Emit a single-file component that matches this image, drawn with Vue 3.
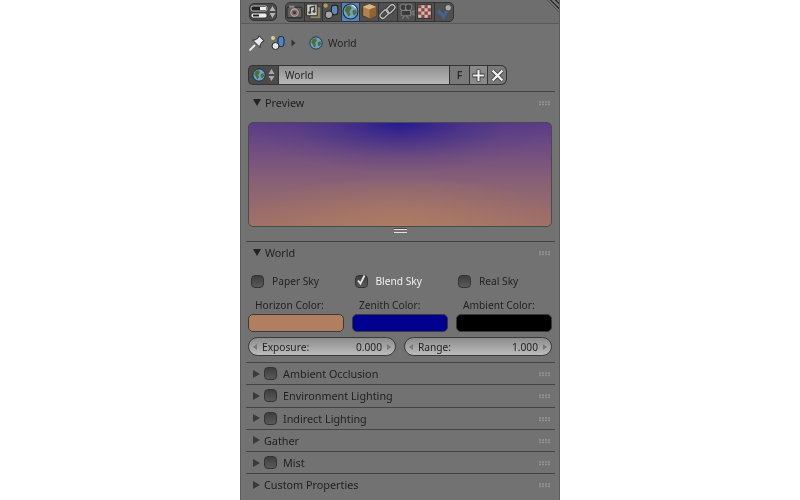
<script setup>
const tabs = ['render', 'layers', 'scene', 'world', 'object', 'link', 'camera', 'texture', 'check']

const checks = [
  { label: 'Paper Sky', on: false },
  { label: 'Blend Sky', on: true },
  { label: 'Real Sky', on: false }
]

const colors = [
  { label: 'Horizon Color:', value: '#b07f5f' },
  { label: 'Zenith Color:', value: '#000090' },
  { label: 'Ambient Color:', value: '#000000' }
]

const sliders = [
  { label: 'Exposure:', value: '0.000' },
  { label: 'Range:', value: '1.000' }
]

const closed = [
  { label: 'Ambient Occlusion', box: true },
  { label: 'Environment Lighting', box: true },
  { label: 'Indirect Lighting', box: true },
  { label: 'Gather', box: false },
  { label: 'Mist', box: true },
  { label: 'Custom Properties', box: false }
]
</script>

<template>
  <div class="page">
    <div class="editor">
      <div class="header">
        <div class="mode">
          <svg width="18" height="14" viewBox="0 0 18 14">
            <rect x="1" y="1" width="16" height="5" rx="2" fill="#222" stroke="#ddd" stroke-width="0.8" />
            <rect x="10" y="2" width="6" height="3" fill="#eee" />
            <rect x="1" y="8" width="16" height="5" rx="2" fill="#eee" stroke="#222" stroke-width="0.8" />
            <rect x="3" y="9.500" width="6" height="2" fill="#222" />
          </svg>
          <svg class="updown" width="7" height="14" viewBox="0 0 7 14">
            <path d="M3.500 1 L6.500 6 H0.500Z M3.500 13 L6.500 8 H0.500Z" fill="#b4b4b4" />
          </svg>
        </div>
        <div class="tabs">
          <div v-for="t in tabs" :key="t" class="tab" :class="{ active: t === 'world' }">
            <svg width="17" height="17" viewBox="0 0 16 16">
              <g v-if="t === 'render'">
                <rect x="1" y="4" width="14" height="10" rx="1" fill="#5e5e5e" stroke="#2a2a2a" />
                <rect x="3" y="2.500" width="5" height="2" fill="#8a8a8a" />
                <circle cx="8" cy="9" r="3.500" fill="#8a6a68" stroke="#b0b0b0" />
                <circle cx="8" cy="9" r="1.500" fill="#3a3a3a" />
              </g>
              <g v-else-if="t === 'layers'">
                <rect x="4.500" y="3.500" width="10.500" height="11.500" fill="#8d8468" stroke="#3a3a3a" />
                <rect x="1.500" y="1" width="10" height="11" fill="#cfc8ac" stroke="#333" />
                <path d="M5 9 V4 L9 3 V8" fill="none" stroke="#2c3c60" stroke-width="1.300" />
                <circle cx="4.500" cy="9" r="1.300" fill="#2c3c60" />
                <circle cx="8.500" cy="8" r="1.300" fill="#2c3c60" />
              </g>
              <g v-else-if="t === 'scene'">
                <circle cx="2.500" cy="2.500" r="2" fill="#a8a460" />
                <rect x="8" y="2" width="6" height="9" rx="2.500" fill="#5f86bd" stroke="#222" />
                <circle cx="5.500" cy="11" r="3.500" fill="#a6a6a6" stroke="#222" />
              </g>
              <g v-else-if="t === 'world'">
                <circle cx="8" cy="8" r="7" fill="#6aa2c8" stroke="#1c2c3c" />
                <path d="M4 3 L8 2.500 L9 5 L7 8 L8 11 L6 13 L4 9 L2.500 7Z M10 7 L13 6 L14 9 L11.500 12 L10 10Z" fill="#4f6f38" />
                <path d="M9 2 Q12 2.500 13 5" fill="none" stroke="#e6f0f6" />
              </g>
              <g v-else-if="t === 'object'">
                <path d="M8 1 L14.500 3.500 V12 L8 15 L1.500 12 V3.500Z" fill="#b2824c" stroke="#4a3a28" />
                <path d="M1.500 3.500 L8 6 L14.500 3.500 L8 1Z" fill="#dcb585" />
                <path d="M8 6 V15 L14.500 12 V3.500Z" fill="#8f6238" />
              </g>
              <g v-else-if="t === 'link'" fill="none">
                <rect x="0.500" y="8" width="9" height="5" rx="2.500" transform="rotate(-45 5 10.500)" stroke="#333" stroke-width="2.800" />
                <rect x="6.500" y="3" width="9" height="5" rx="2.500" transform="rotate(-45 11 5.500)" stroke="#333" stroke-width="2.800" />
                <rect x="0.500" y="8" width="9" height="5" rx="2.500" transform="rotate(-45 5 10.500)" stroke="#bdbdbd" stroke-width="1.300" />
                <rect x="6.500" y="3" width="9" height="5" rx="2.500" transform="rotate(-45 11 5.500)" stroke="#bdbdbd" stroke-width="1.300" />
              </g>
              <g v-else-if="t === 'camera'">
                <circle cx="5" cy="4" r="3" fill="#3c3c3c" stroke="#808080" />
                <circle cx="10" cy="4" r="3" fill="#3c3c3c" stroke="#808080" />
                <rect x="3" y="7" width="9" height="5" rx="1" fill="#3a3a3a" stroke="#808080" />
                <path d="M12 9 L15 7.500 V11.500 L12 10Z M6 12 L4 15 M8 12 L10 15" fill="#555" stroke="#808080" />
              </g>
              <g v-else-if="t === 'texture'">
                <rect x="1.500" y="1.500" width="13" height="13" fill="#c8bcb8" stroke="#333" />
                <path d="M2 2 h3 v3 h-3Z M8 2 h3 v3 h-3Z M5 5 h3 v3 h-3Z M11 5 h3 v3 h-3Z M2 8 h3 v3 h-3Z M8 8 h3 v3 h-3Z M5 11 h3 v3 h-3Z M11 11 h3 v3 h-3Z" fill="#96423c" />
              </g>
              <g v-else>
                <path d="M2 7 L7 13 L12 5" fill="none" stroke="#46628f" stroke-width="3" />
                <circle cx="11.500" cy="4.500" r="3" fill="#ababab" stroke="#333" stroke-width="0.700" />
              </g>
            </svg>
          </div>
        </div>
        <div class="corner"></div>
      </div>

      <div class="crumbs">
        <svg class="pin" width="16" height="16" viewBox="0 0 16 16">
          <path d="M0.500 15.500 L6 10" stroke="#eee" stroke-width="1.800" />
          <path d="M10 0.800 L15.200 6 L13 7 L11 10 L11 12.500 L3.500 5 L6 5 L9 3Z" fill="#e8e8e8" stroke="#2a2a2a" />
        </svg>
        <svg class="scene-icon" width="16" height="16" viewBox="0 0 16 16">
          <circle cx="3" cy="3" r="2" fill="#ddd67a" />
          <rect x="8" y="1.500" width="6" height="10" rx="2.500" fill="#4d83cc" stroke="#222" />
          <circle cx="5.500" cy="11" r="3.500" fill="#e4e4e4" stroke="#222" />
        </svg>
        <svg class="crumb-arrow" width="5" height="8" viewBox="0 0 5 8"><path d="M0.500 0.500 L4.500 4 L0.500 7.500Z" fill="#333" /></svg>
        <svg class="crumb-globe" width="14" height="14" viewBox="0 0 16 16">
          <circle cx="8" cy="8" r="7" fill="#6aa2c8" stroke="#1c2c3c" />
          <path d="M4 3 L8 2.500 L9 5 L7 8 L8 11 L6 13 L4 9 L2.500 7Z M10 7 L13 6 L14 9 L11.500 12 L10 10Z" fill="#4f6f38" />
        </svg>
        <span class="crumb-text">World</span>
      </div>

      <div class="id-row">
        <div class="id-browse">
          <svg width="14" height="14" viewBox="0 0 16 16">
            <circle cx="8" cy="8" r="7" fill="#6aa2c8" stroke="#1c2c3c" />
            <path d="M4 3 L8 2.500 L9 5 L7 8 L8 11 L6 13 L4 9 L2.500 7Z M10 7 L13 6 L14 9 L11.500 12 L10 10Z" fill="#4f6f38" />
          </svg>
          <svg width="7" height="14" viewBox="0 0 7 14">
            <path d="M3.500 1 L6.500 6 H0.500Z M3.500 13 L6.500 8 H0.500Z" fill="#a8a8a8" />
          </svg>
        </div>
        <div class="id-name">World</div>
        <div class="id-btn id-f">F</div>
        <div class="id-btn id-add">
          <svg width="13" height="13" viewBox="0 0 12 12"><path d="M6 0.500 V11.500 M0.500 6 H11.500" stroke="#333" stroke-width="3.500" /><path d="M6 1 V11 M1 6 H11" stroke="#f0f0f0" stroke-width="2" /></svg>
        </div>
        <div class="id-btn id-x">
          <svg width="13" height="13" viewBox="0 0 12 12"><path d="M1.500 1.500 L10.500 10.500 M10.500 1.500 L1.500 10.500" stroke="#333" stroke-width="3.500" /><path d="M1.500 1.500 L10.500 10.500 M10.500 1.500 L1.500 10.500" stroke="#f0f0f0" stroke-width="2" /></svg>
        </div>
      </div>

      <section class="panel panel-preview">
        <div class="panel-head">
          <span class="tri-down"></span>
          <span class="panel-title">Preview</span>
          <span class="grip"></span>
        </div>
        <div class="preview"></div>
        <div class="resize"></div>
      </section>

      <section class="panel panel-world">
        <div class="panel-head">
          <span class="tri-down"></span>
          <span class="panel-title">World</span>
          <span class="grip"></span>
        </div>
        <div class="checks">
          <div v-for="c in checks" :key="c.label" class="check" :class="{ on: c.on }">
            <span class="box">
              <svg v-if="c.on" width="13" height="13" viewBox="0 0 13 13"><path d="M3 5.500 L5.500 8.500 L9.500 0.500" fill="none" stroke="#e8e8e8" stroke-width="1.800" /></svg>
            </span>
            <span class="check-label">{{ c.label }}</span>
          </div>
        </div>
        <div class="colors">
          <div v-for="c in colors" :key="c.label" class="color">
            <div class="color-label">{{ c.label }}</div>
            <div class="swatch" :style="{ background: c.value }"></div>
          </div>
        </div>
        <div class="sliders">
          <div v-for="s in sliders" :key="s.label" class="slider">
            <span class="arrow-l"></span>
            <span class="slider-label">{{ s.label }}</span>
            <span class="slider-value">{{ s.value }}</span>
            <span class="arrow-r"></span>
          </div>
        </div>
      </section>

      <section v-for="p in closed" :key="p.label" class="panel panel-closed">
        <div class="panel-head">
          <span class="tri-right"></span>
          <span v-if="p.box" class="box small"></span>
          <span class="panel-title" :class="{ boxed: p.box }">{{ p.label }}</span>
          <span class="grip"></span>
        </div>
      </section>
    </div>
  </div>
</template>

<style>
html, body {
  margin: 0;
  background: #fff;
}
</style>

<style scoped>
.page {
  width: 800px;
  height: 500px;
  display: flex;
  justify-content: center;
  overflow: hidden;
  background: #fff;
}

.editor {
  width: 320px;
  height: 500px;
  background: #727272;
  box-sizing: border-box;
  border-left: 1px solid #5c5c5c;
  border-right: 1px solid #5c5c5c;
  font-family: "Noto Sans", "DejaVu Sans", sans-serif;
  font-size: 10.200px;
  color: #1f1f1f;
  overflow: hidden;
  filter: blur(0.35px);
}

.header {
  position: relative;
  height: 24px;
  box-sizing: border-box;
  display: flex;
  align-items: center;
  gap: 8px;
  padding-left: 8px;
  background: #6e6e6e;
  border-bottom: 1px solid #5a5a5a;
}

.mode {
  width: 28px;
  height: 18px;
  box-sizing: border-box;
  display: flex;
  align-items: center;
  justify-content: center;
  gap: 1px;
  background: #4a4a4a;
  border: 1px solid #333;
  border-radius: 5px;
}

.tabs {
  display: flex;
  height: 18px;
  border: 1px solid #333;
  border-radius: 5px;
  overflow: hidden;
  background: #505050;
}

.tab {
  width: 18.600px;
  display: flex;
  align-items: center;
  justify-content: center;
  border-right: 1px solid #333;
  box-sizing: border-box;
}

.tab:last-child {
  border-right: 0;
}

.tab.active {
  background: #5680c2;
}

.corner {
  position: absolute;
  right: 0;
  top: 0;
  width: 12px;
  height: 12px;
  background: repeating-linear-gradient(45deg, #727272 0 1.500px, #333 1.500px 3px);
  clip-path: polygon(0 0, 100% 0, 100% 100%);
}

.crumbs {
  height: 37px;
  display: flex;
  align-items: center;
  padding-left: 8px;
  box-sizing: border-box;
}

.scene-icon {
  margin-left: 5px;
}

.crumb-arrow {
  margin-left: 5px;
}

.crumb-globe {
  margin-left: 13px;
}

.crumb-text {
  margin-left: 5px;
}

.id-row {
  display: flex;
  height: 20px;
  margin: 4px 0 0 7px;
  width: 259px;
  box-sizing: border-box;
}

.id-browse {
  width: 30px;
  display: flex;
  align-items: center;
  justify-content: center;
  gap: 2px;
  background: #4a4a4a;
  border: 1px solid #333;
  border-right: 0;
  border-radius: 5px 0 0 5px;
  box-sizing: border-box;
}

.id-name {
  flex: 1;
  display: flex;
  align-items: center;
  padding-left: 6px;
  background: linear-gradient(#8f8f8f, #b9b9b9);
  border: 1px solid #333;
  box-sizing: border-box;
}

.id-btn {
  display: flex;
  align-items: center;
  justify-content: center;
  background: #797979;
  border: 1px solid #333;
  border-left: 0;
  box-sizing: border-box;
}

.id-f {
  width: 20px;
  font-weight: 600;
  color: #2a2a2a;
  font-size: 10.500px;
}

.id-add {
  width: 18px;
  background: #8a8a8a;
}

.id-x {
  width: 19px;
  border-radius: 0 6px 6px 0;
}

.panel {
  margin: 0 4px 0 5px;
  border-top: 1px solid #444;
}

.panel-preview {
  margin-top: 6px;
  height: 150px;
  box-sizing: border-box;
}

.panel-world {
  height: 121px;
  box-sizing: border-box;
}

.panel-closed {
  height: 22.300px;
  box-sizing: border-box;
}

.panel-head {
  position: relative;
  height: 21px;
  display: flex;
  align-items: center;
  padding-left: 7px;
  font-size: 10.800px;
}

.panel-world .panel-head {
  height: 20px;
}

.tri-down {
  width: 0;
  height: 0;
  border-left: 4px solid transparent;
  border-right: 4px solid transparent;
  border-top: 7px solid #222;
}

.tri-right {
  width: 0;
  height: 0;
  border-top: 4px solid transparent;
  border-bottom: 4px solid transparent;
  border-left: 7px solid #3a3a3a;
}

.panel-title {
  margin-left: 4px;
}

.panel-title.boxed {
  margin-left: 6px;
}

.grip {
  position: absolute;
  right: 5px;
  top: 9px;
  width: 11px;
  height: 5px;
  background-image: radial-gradient(circle at 1px 1px, #a0a0a0 0.700px, transparent 0.900px);
  background-size: 3px 2.500px;
  opacity: 0.8;
}

.preview {
  height: 105px;
  margin: 9px 3px 0 2px;
  box-sizing: border-box;
  border: 1px solid #4a4a4a;
  border-radius: 5px;
  background:
    radial-gradient(ellipse 150px 50px at 50% 0, rgba(36, 24, 146, 0.95) 0%, rgba(44, 30, 142, 0.72) 20%, rgba(52, 38, 138, 0.42) 45%, rgba(60, 45, 135, 0.14) 72%, rgba(60, 45, 135, 0) 100%),
    radial-gradient(ellipse 170px 50px at 50% 100%, rgba(178, 128, 96, 0.75) 0%, rgba(178, 128, 96, 0.35) 50%, rgba(178, 128, 96, 0) 100%),
    linear-gradient(#5a3c88 0%, #74507f 30%, #8a6274 60%, #a07068 100%);
}

.resize {
  width: 13px;
  height: 2px;
  margin: 2px auto 0;
  border-top: 1px solid #e0e0e0;
  border-bottom: 1px solid #e0e0e0;
  box-shadow: 0 -1px 0 #4a4a4a;
}

.box {
  display: inline-flex;
  width: 13px;
  height: 13px;
  flex: none;
  box-sizing: border-box;
  background: linear-gradient(#3e3e3e, #5a5a5a);
  border: 1px solid #333;
  border-radius: 4px;
}

.box svg {
  margin: -1px;
  flex: none;
}

.box.small {
  margin-left: 4px;
}

.checks {
  display: flex;
  margin-top: 11px;
  padding-left: 5px;
  height: 16px;
  align-items: center;
}

.check {
  flex: none;
  width: 103.500px;
  display: flex;
  align-items: center;
  gap: 8px;
  color: #222;
}

.check.on .check-label {
  color: #f0f0f0;
}

.colors {
  display: flex;
  gap: 8px;
  margin: 8px 3px 0 2px;
}

.color {
  flex: 1;
}

.color-label {
  height: 17px;
  line-height: 16px;
  padding-left: 7px;
  color: #222;
}

.swatch {
  height: 18px;
  box-sizing: border-box;
  border: 1px solid #3a3a3a;
  border-radius: 5px;
}

.sliders {
  display: flex;
  gap: 8px;
  margin: 5px 3px 0 2px;
}

.slider {
  flex: 1;
  height: 19px;
  box-sizing: border-box;
  display: flex;
  align-items: center;
  padding: 0 4px;
  border: 1px solid #3a3a3a;
  border-radius: 10px;
  background: linear-gradient(#8c8c8c, #bcbcbc);
  color: #222;
}

.slider-label {
  margin-left: 5px;
}

.slider-value {
  margin-left: auto;
  margin-right: 5px;
}

.arrow-l {
  border-top: 3px solid transparent;
  border-bottom: 3px solid transparent;
  border-right: 4px solid #777;
}

.arrow-r {
  border-top: 3px solid transparent;
  border-bottom: 3px solid transparent;
  border-left: 4px solid #777;
}
</style>
